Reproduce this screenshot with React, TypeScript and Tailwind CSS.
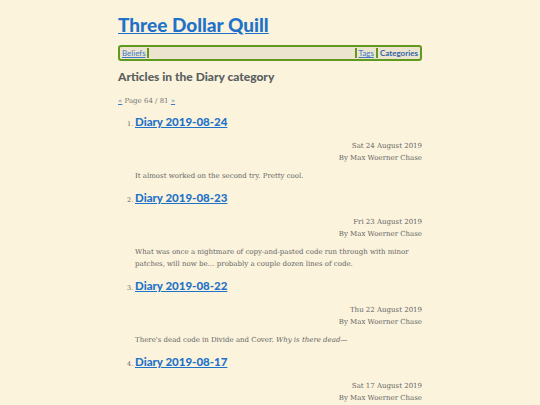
import React from 'react'

const POSTS = [
  {
    title: 'Diary 2019-08-24',
    date: 'Sat 24 August 2019',
    body: <>It almost worked on the second try. Pretty cool.</>,
  },
  {
    title: 'Diary 2019-08-23',
    date: 'Fri 23 August 2019',
    body: (
      <>
        What was once a nightmare of copy-and-pasted code run through with minor patches, will now be… probably a
        couple dozen lines of code.
      </>
    ),
  },
  {
    title: 'Diary 2019-08-22',
    date: 'Thu 22 August 2019',
    body: (
      <>
        There's dead code in Divide and Cover. <em>Why is there dead—</em>
      </>
    ),
  },
  {
    title: 'Diary 2019-08-17',
    date: 'Sat 17 August 2019',
    body: null,
  },
]

const sans = 'font-["Lato","Noto_Sans",sans-serif]'
const serif = 'font-["DejaVu_Serif","Liberation_Serif",serif]'

export default function App() {
  return (
    <div className="h-[405px] overflow-hidden bg-[#fbf3dc]">
      <div className="mx-auto w-[304px] pt-[14px]">
        {/* Header */}
        <h1 className={`${sans} text-[19px] font-black leading-[22px] text-[#1f72c9] underline`}>
          <a href="#">Three Dollar Quill</a>
        </h1>

        {/* Nav */}
        <nav
          className={`${sans} mt-[9px] flex h-[16px] items-center rounded-[3px] border-2 border-[#5f9a1e] bg-[#ece4cf] px-[2px] text-[8px] leading-[10px]`}
        >
          <a href="#" className="border-r-2 border-[#5f9a1e] pr-[1px] text-[#3d7bc4] underline">
            Beliefs
          </a>
          <div className="flex-1" />
          <a href="#" className="border-l-2 border-r-2 border-[#5f9a1e] px-[2px] text-[#3d7bc4] underline">
            Tags
          </a>
          <span className="pl-[2px] font-bold text-[#2f65a8]">Categories</span>
        </nav>

        <h2 className={`${sans} mt-[8px] text-[12px] font-black leading-[16px] text-[#5a6060]`}>
          Articles in the Diary category
        </h2>

        <div className={`${serif} mt-[11px] text-[7px] leading-[10px] text-[#777]`}>
          <a href="#" className="text-[#3d7bc4] underline">
            «
          </a>{' '}
          Page 64 / 81{' '}
          <a href="#" className="text-[#3d7bc4] underline">
            »
          </a>
        </div>

        <ol className="mt-[8px] pl-[17px]">
          {POSTS.map((p, i) => (
            <li key={p.title} className="flex flex-col">
              <div className="flex items-baseline">
                <span className={`${serif} -ml-[8px] w-[8px] text-[6.5px] text-[#666]`}>{i + 1}.</span>
                <a href="#" className={`${sans} text-[11.5px] font-black leading-[16px] text-[#1f72c9] underline`}>
                  {p.title}
                </a>
              </div>
              <div className={`${serif} mt-[10px] text-right text-[7px] leading-[12px] text-[#666]`}>
                <div>{p.date}</div>
                <div>By Max Woerner Chase</div>
              </div>
              {p.body && (
                <p className={`${serif} mt-[6px] mb-[8px] text-[7px] leading-[12px] text-[#666]`}>{p.body}</p>
              )}
            </li>
          ))}
        </ol>
      </div>
    </div>
  )
}
